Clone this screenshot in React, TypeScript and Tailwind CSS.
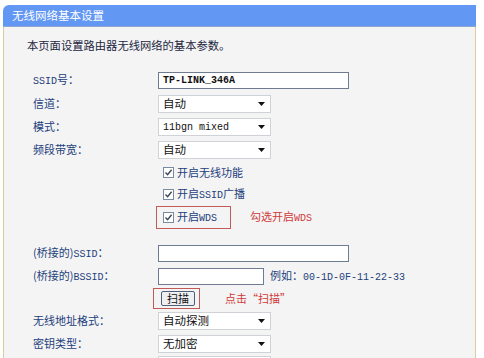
const cjk = "font-['Noto_Sans_CJK_SC',sans-serif]";

function M({ children }: { children: React.ReactNode }) {
  return <span className="font-['Liberation_Mono',monospace] text-[10px]">{children}</span>;
}

function Arrow() {
  return (
    <svg width="7" height="4" viewBox="0 0 7 4">
      <path d="M0 0 L7 0 L3.5 4 Z" fill="#111" />
    </svg>
  );
}

function Select({ value }: { value: React.ReactNode }) {
  return (
    <div className="w-[113px] h-[18px] bg-white border border-[#cfd2d6] flex items-center justify-between pl-[4px] pr-[5px] text-[#111] text-[11.5px]">
      <span>{value}</span>
      <Arrow />
    </div>
  );
}

function Check({ label }: { label: React.ReactNode }) {
  return (
    <div className="flex items-center gap-[3px]">
      <span className="w-[11px] h-[11px] bg-white border border-[#7a8aa2] flex items-center justify-center">
        <svg width="9" height="9" viewBox="0 0 9 9">
          <path d="M1.5 4.5 L3.6 6.7 L7.6 1.8" stroke="#3a4658" strokeWidth="1.4" fill="none" />
        </svg>
      </span>
      <span className="text-[#23407a]">{label}</span>
    </div>
  );
}

function Row({ h, label, children }: { h: string; label?: React.ReactNode; children?: React.ReactNode }) {
  return (
    <div className={`flex items-center ${h}`}>
      <div className="w-[125px] shrink-0 text-[#23407a]">{label}</div>
      <div className="flex items-center">{children}</div>
    </div>
  );
}

export default function App() {
  return (
    <div className={`w-[484px] h-[358px] overflow-hidden bg-white pt-[5px] pl-[3px] text-[11px] leading-none ${cjk}`}>
      <div className="w-[473px] flex flex-col">
        <div className="h-[22px] bg-[#6297f4] rounded-tl-[6px] flex items-center pl-[9px] text-white text-[11.5px] border-b border-[#8fa6cf]">
          无线网络基本设置
        </div>
        <div className="h-[400px] bg-[#f4f4f5] border-l border-r border-[#dccb9c] pl-[29px]">
          <div className="mt-[7px] h-[24px] flex items-center -ml-[6px] text-[#1c2640] text-[11.3px]">
            本页面设置路由器无线网络的基本参数。
          </div>

          <div className="mt-[11px]">
            <Row h="h-[23px]" label={<><M>SSID</M>号：</>}>
              <div className="w-[191px] h-[17px] bg-white border border-[#6f7b91] flex items-center pl-[4px] text-[#111]">
                <span className="font-['Liberation_Mono',monospace] text-[10px] font-bold">TP-LINK_346A</span>
              </div>
            </Row>
            <Row h="h-[23px]" label="信道：">
              <Select value="自动" />
            </Row>
            <Row h="h-[23px]" label="模式：">
              <Select value={<M>11bgn mixed</M>} />
            </Row>
            <Row h="h-[23px]" label="频段带宽：">
              <Select value="自动" />
            </Row>
            <Row h="h-[22px]">
              <div className="pl-[5px]">
                <Check label="开启无线功能" />
              </div>
            </Row>
            <Row h="h-[22px]">
              <div className="pl-[5px]">
                <Check label={<>开启<M>SSID</M>广播</>} />
              </div>
            </Row>
            <Row h="h-[24px]">
              <div className="-ml-[2px] w-[75px] h-[23px] border border-[#c25a57] flex items-center pl-[6px]">
                <Check label={<>开启<M>WDS</M></>} />
              </div>
              <span className="ml-[19px] text-[#d03a3a]">
                勾选开启<M>WDS</M>
              </span>
            </Row>

            <div className="h-[13px]" />

            <Row h="h-[23px]" label={<>(桥接的)<M>SSID</M>：</>}>
              <div className="w-[191px] h-[17px] bg-white border border-[#6f7b91]" />
            </Row>
            <Row h="h-[22px]" label={<>(桥接的)<M>BSSID</M>：</>}>
              <div className="w-[106px] h-[17px] bg-white border border-[#6f7b91]" />
              <span className="ml-[6px] text-[#23407a]">
                例如：<M>00-1D-0F-11-22-33</M>
              </span>
            </Row>
            <Row h="h-[22px]">
              <div className="-ml-[5px] w-[47px] h-[21px] border border-[#c25a57] flex items-center pl-[7px]">
                <div className="w-[34px] h-[15px] bg-[#eef0f4] border border-[#4f5f78] rounded-[2px] flex items-center justify-center text-[#111]">
                  扫描
                </div>
              </div>
              <span className="ml-[25px] text-[#d03a3a]">点击“扫描”</span>
            </Row>
            <Row h="h-[23px]" label="无线地址格式：">
              <Select value="自动探测" />
            </Row>
            <Row h="h-[23px]" label="密钥类型：">
              <Select value="无加密" />
            </Row>
            <div className="flex items-start h-[23px] pt-[1px]">
              <div className="w-[125px] shrink-0" />
              <Select value="" />
            </div>
          </div>
        </div>
      </div>
    </div>
  );
}
